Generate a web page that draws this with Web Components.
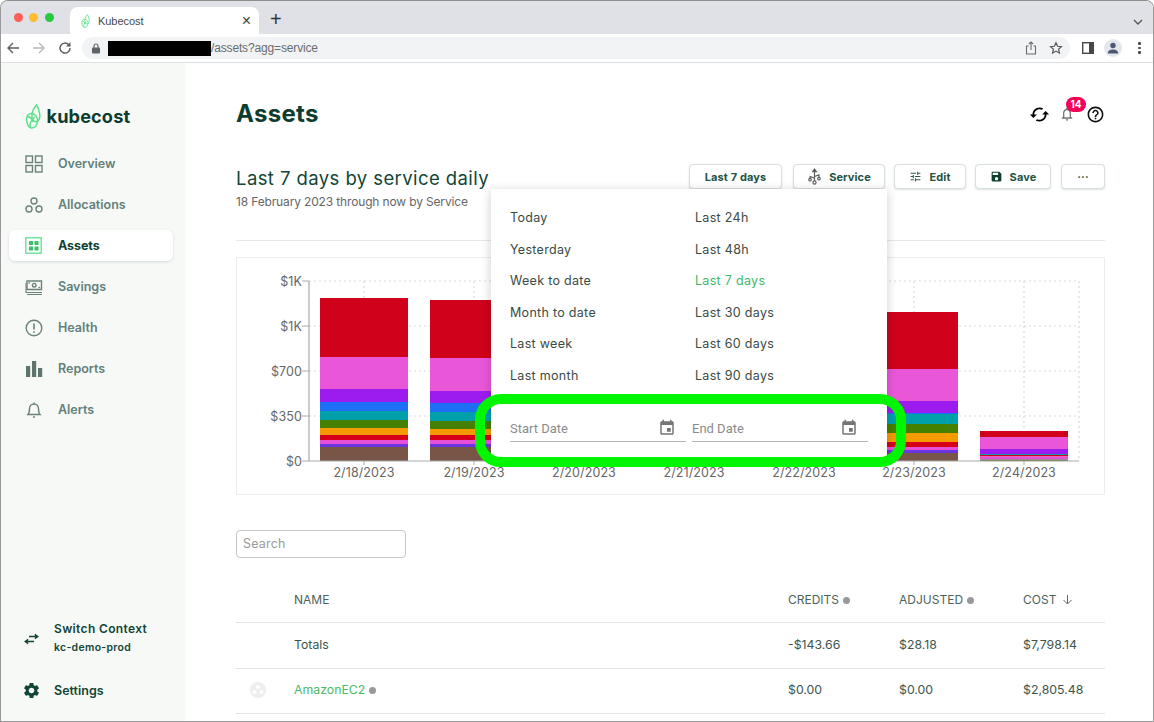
<!DOCTYPE html>
<html lang="en">
<head>
<meta charset="utf-8">
<title>Kubecost</title>
<style>
  html, body { margin: 0; height: 722px; overflow: hidden; background: #fff; }
  body { font-family: Inter, "Liberation Sans", sans-serif; }
</style>
</head>
<body>
<browser-window>
  <app-sidebar slot="side"></app-sidebar>
  <assets-page></assets-page>
</browser-window>

<script>
// Shared material icon paths
const ICONS = {
  cached: "M19 8l-4 4h3c0 3.31-2.69 6-6 6-1.010 0-1.970-.25-2.800-.7l-1.460 1.460C8.970 19.540 10.430 20 12 20c4.420 0 8-3.580 8-8h3l-4-4zM6 12c0-3.310 2.690-6 6-6 1.010 0 1.970.25 2.800.7l1.460-1.460C15.030 4.460 13.570 4 12 4c-4.420 0-8 3.580-8 8H1l4 4 4-4H6z",
  help: "M11 18h2v-2h-2v2zm1-16C6.48 2 2 6.48 2 12s4.48 10 10 10 10-4.48 10-10S17.52 2 12 2zm0 18c-4.41 0-8-3.59-8-8s3.59-8 8-8 8 3.59 8 8-3.59 8-8 8zm0-14c-2.21 0-4 1.79-4 4h2c0-1.1.9-2 2-2s2 .9 2 2c0 2-3 1.75-3 5h2c0-2.25 3-2.5 3-5 0-2.21-1.79-4-4-4z",
  bell: "M12 22c1.1 0 2-.9 2-2h-4c0 1.1.9 2 2 2zm6-6v-5c0-3.07-1.63-5.64-4.5-6.32V4c0-.83-.67-1.5-1.5-1.5s-1.5.67-1.5 1.5v.68C7.64 5.36 6 7.92 6 11v5l-2 2v1h16v-1l-2-2zm-2 1H8v-6c0-2.48 1.51-4.5 4-4.5s4 2.02 4 4.5v6z",
  event: "M17 12h-5v5h5v-5zM16 1v2H8V1H6v2H5c-1.11 0-1.99.9-1.99 2L3 19c0 1.1.89 2 2 2h14c1.1 0 2-.9 2-2V5c0-1.1-.9-2-2-2h-1V1h-2zm3 18H5V8h14v11z",
  gear: "M19.14 12.94c.04-.3.06-.61.06-.94 0-.32-.02-.64-.07-.94l2.03-1.58c.18-.14.23-.41.12-.61l-1.92-3.32c-.12-.22-.37-.29-.59-.22l-2.39.96c-.5-.38-1.03-.7-1.62-.94l-.36-2.54c-.04-.24-.24-.41-.48-.41h-3.84c-.24 0-.43.17-.47.41l-.36 2.54c-.59.24-1.13.57-1.62.94l-2.39-.96c-.22-.08-.47 0-.59.22L2.74 8.87c-.12.21-.08.47.12.61l2.03 1.58c-.05.3-.09.63-.09.94s.02.64.07.94l-2.03 1.58c-.18.14-.23.41-.12.61l1.92 3.32c.12.22.37.29.59.22l2.39-.96c.5.38 1.03.7 1.62.94l.36 2.54c.05.24.24.41.48.41h3.84c.24 0 .44-.17.47-.41l.36-2.54c.59-.24 1.13-.56 1.62-.94l2.39.96c.22.08.47 0 .59-.22l1.92-3.32c.12-.22.07-.47-.12-.61l-2.01-1.58zM12 15.6c-1.98 0-3.6-1.62-3.6-3.6s1.62-3.6 3.6-3.6 3.6 1.62 3.6 3.6-1.62 3.6-3.6 3.6z",
  save: "M17 3H5c-1.11 0-2 .9-2 2v14c0 1.1.89 2 2 2h14c1.1 0 2-.9 2-2V7l-4-4zm-5 16c-1.66 0-3-1.34-3-3s1.34-3 3-3 3 1.34 3 3-1.34 3-3 3zm3-10H5V5h10v4z",
  tune: "M3 17v2h6v-2H3zM3 5v2h10V5H3zm10 16v-2h8v-2h-8v-2h-2v6h2zM7 9v2H3v2h4v2h2V9H7zm14 4v-2H11v2h10zm-6-4h2V7h4V5h-4V3h-2v6z",
};

function icon(name, size, color) {
  return `<svg width="${size}" height="${size}" viewBox="0 0 24 24" fill="${color}" style="display:block;flex:none"><path d="${ICONS[name]}"/></svg>`;
}

const LEAF = (size) => `<svg width="${size * 0.64}" height="${size}" viewBox="0 0 16 25" fill="none" stroke="#5ee08a" stroke-width="1.500" style="display:block;flex:none">
  <path d="M11.500 1C8 5 6.500 9.500 7 13.500c.4 3 3 5 5 4 2.500-1.300 3.200-5 2.500-8.500C14 6 13 3 11.500 1z"/>
  <path d="M1.500 15c0-3.500 2.500-6 5.500-5.500 3.500.5 6 4 5.500 8-.5 3.500-2.500 6.500-6 6.500C3.500 24 1.500 19 1.500 15z"/>
  <path d="M2 12c3 1 5.500 3.500 6 6M5.500 24c-1.500-3 0-8 4.500-11"/>
</svg>`;

class BrowserWindow extends HTMLElement {
  constructor() {
    super();
    this.attachShadow({ mode: "open" });
    this.shadowRoot.innerHTML = `
      <style>
        :host { display: flex; flex-direction: column; width: 1154px; height: 722px; box-sizing: border-box;
          border: 1px solid #9a9a9a; border-top-color: #8d8d8d; border-radius: 8px 8px 0 0; overflow: hidden;
          font-family: Inter, "Liberation Sans", sans-serif; }
        .tabs { height: 33px; flex: none; background: #dfe1e6; display: flex; align-items: flex-end; }
        .lights { display: flex; gap: 6.500px; width: 69px; box-sizing: border-box; padding: 0 0 12px 12.500px; }
        .lights i { width: 9px; height: 9px; border-radius: 50%; }
        .tab { width: 189px; height: 27px; box-sizing: border-box; background: #fff; border-radius: 8px 8px 0 0;
          display: flex; align-items: center; padding: 0 8px 0 11px; font: 11px "Liberation Sans", sans-serif; color: #45494e; }
        .tab span { margin-left: 8px; flex: 1; letter-spacing: -.05px; }
        .tab b { font: 400 16px "Liberation Sans", sans-serif; color: #444; }
        .plus { font: 400 20px "Liberation Sans", sans-serif; color: #333; margin: 0 0 3px 11px; flex: 1; line-height: 24px; }
        .chev { margin: 0 10px 9px 0; }
        .bar { height: 28px; flex: none; background: #fff; border-bottom: 1px solid #dcdfe2; display: flex; align-items: center; }
        .nav { width: 81px; flex: none; display: flex; align-items: center; padding-left: 5px; box-sizing: border-box; gap: 9px; }
        .pill { flex: none; width: 988px; height: 22px; border-radius: 11px; background: #f1f3f4; display: flex; align-items: center;
          font: 12px "Liberation Sans", sans-serif; color: #6a6d70; padding-left: 9px; box-sizing: border-box; letter-spacing: -.15px; }
        .lock { margin-right: 7px; }
        .redact { width: 103px; height: 15px; background: #000; }
        .pill .right { margin-left: auto; display: flex; gap: 12px; margin-right: 7px; align-items: center; }
        .tools { display: flex; align-items: center; flex: 1; padding-left: 13px; gap: 10px; }
        .avatar { width: 18px; height: 18px; border-radius: 50%; background: #e3e6ea; display: flex; align-items: center; justify-content: center; }
        .dots { display: flex; flex-direction: column; gap: 2px; margin-left: 6px; }
        .dots i { width: 2.500px; height: 2.500px; border-radius: 50%; background: #44474a; }
        .content { flex: 1; display: flex; min-height: 0; position: relative; }
      </style>
      <div class="tabs">
        <div class="lights"><i style="background:#ff5f57"></i><i style="background:#febc2e"></i><i style="background:#28c840"></i></div>
        <div class="tab">${LEAF(14)}<span>Kubecost</span><b>×</b></div>
        <div class="plus">+</div>
        <svg class="chev" width="10" height="6" viewBox="0 0 10 6" fill="none" stroke="#555" stroke-width="1.300"><path d="M1 1l4 4 4-4"/></svg>
      </div>
      <div class="bar">
        <div class="nav">
          <svg width="14" height="14" viewBox="0 0 14 14" fill="none" stroke="#5a5e62" stroke-width="1.400"><path d="M13 7H2M7 2L2 7l5 5"/></svg>
          <svg width="14" height="14" viewBox="0 0 14 14" fill="none" stroke="#b5b8bb" stroke-width="1.400" style="margin-left:3px"><path d="M1 7h11M7 2l5 5-5 5"/></svg>
          <svg width="14" height="14" viewBox="0 0 14 14" fill="none" stroke="#5a5e62" stroke-width="1.500" style="margin-left:3px"><path d="M12 7a5 5 0 1 1-1.500-3.500L12 5"/><path d="M12.500 1v4.500H8z" fill="#5a5e62" stroke="none"/></svg>
        </div>
        <div class="pill">
          <svg class="lock" width="10" height="11" viewBox="0 0 10 11" fill="#5f6368"><rect x="1" y="4.500" width="8" height="6" rx="1"/><path d="M3 5V3a2 2 0 0 1 4 0v2" fill="none" stroke="#5f6368" stroke-width="1.100"/></svg>
          <div class="redact"></div><span>/assets?agg=service</span>
          <div class="right">
            <svg width="12" height="14" viewBox="0 0 12 14" fill="none" stroke="#6a6d70" stroke-width="1.100"><path d="M3.500 5H1.500v8h9V5H8.500M6 9V1M3.800 3L6 1l2.200 2"/></svg>
            <svg width="14" height="14" viewBox="0 0 24 24" fill="none" stroke="#55585b" stroke-width="2"><path d="M12 3l2.800 6 6.500.7-4.900 4.400 1.400 6.500L12 17.300l-5.800 3.300 1.400-6.500L2.700 9.700 9.200 9z"/></svg>
          </div>
        </div>
        <div class="tools">
          <svg width="12" height="12" viewBox="0 0 12 12" style="margin-left:-1px"><rect x=".7" y=".7" width="10.600" height="10.600" fill="none" stroke="#45484b" stroke-width="1.400"/><rect x="7" y="1" width="4.500" height="10" fill="#45484b"/></svg>
          <div class="avatar"><svg width="12" height="12" viewBox="0 0 12 12" fill="#4a5872"><circle cx="6" cy="3.500" r="2.700"/><path d="M.8 11.500c0-2.800 2.400-4 5.200-4s5.200 1.200 5.200 4z"/></svg></div>
          <div class="dots"><i></i><i></i><i></i></div>
        </div>
      </div>
      <div class="content"><slot name="side"></slot><slot></slot></div>
    `;
  }
}

class NavItem extends HTMLElement {
  constructor() {
    super();
    this.attachShadow({ mode: "open" });
    this.shadowRoot.innerHTML = `
      <style>
        :host { display: flex; align-items: center; height: 31px; margin: 0 12px 10px 8px; padding-left: 16px; gap: 15px;
          border-radius: 6px; font-size: 12.500px; font-weight: 600; color: #62807a; letter-spacing: 0; }
        :host([active]) { background: #fff; color: #0f3f31; font-weight: 700; letter-spacing: -.1px; box-shadow: 0 1px 3px rgba(40,70,60,.16); }
        ::slotted(svg) { display: block; flex: none; }
      </style>
      <slot name="icon"></slot><slot></slot>`;
  }
}

class AppSidebar extends HTMLElement {
  constructor() {
    super();
    this.attachShadow({ mode: "open" });
    const g = 'fill="none" stroke="#6b8279" stroke-width="1.400"';
    this.shadowRoot.innerHTML = `
      <style>
        :host { display: flex; flex-direction: column; width: 184px; height: 100%; box-sizing: border-box; flex: none; background: #f7f9f7;
          padding-top: 40px; }
        .logo { display: flex; align-items: center; gap: 6px; padding-left: 23.500px; margin-bottom: 19px;
          font-size: 18.200px; font-weight: 700; color: #0d3d2e; letter-spacing: .1px; height: 26px; }
        .space { flex: 1; }
        .foot { display: flex; align-items: center; gap: 13px; padding-left: 21px; color: #124536; font-weight: 600; }
        .foot svg { display: block; flex: none; }
        .ctx { font-size: 12px; line-height: 18px; margin-bottom: 23px; letter-spacing: .35px; gap: 15px; }
        .ctx svg { margin-left: 2px; }
        .ctx small { display: block; font-size: 10.400px; font-weight: 600; margin-top: 1px; }
        .set { font-size: 12.500px; height: 20px; margin-bottom: 21px; }
      </style>
      <div class="logo">${LEAF(25)}<span>kubecost</span></div>
      <nav-item><svg slot="icon" width="18" height="18" viewBox="0 0 18 18" ${g}><rect x="1" y="1" width="6.500" height="6.500"/><rect x="10.500" y="1" width="6.500" height="6.500"/><rect x="1" y="10.500" width="6.500" height="6.500"/><rect x="10.500" y="10.500" width="6.500" height="6.500"/></svg>Overview</nav-item>
      <nav-item><svg slot="icon" width="18" height="18" viewBox="0 0 18 18" ${g}><circle cx="9" cy="5" r="3"/><circle cx="4" cy="13" r="3"/><circle cx="14" cy="13" r="3"/></svg>Allocations</nav-item>
      <nav-item active><svg slot="icon" width="18" height="18" viewBox="0 0 18 18"><rect x=".8" y=".8" width="15.400" height="15.400" fill="none" stroke="#5ee08a" stroke-width="1.300"/><g fill="#3fbf6c"><rect x="4" y="4" width="4" height="4"/><rect x="9.500" y="4" width="4" height="4"/><rect x="4" y="9.500" width="4" height="4"/><rect x="9.500" y="9.500" width="4" height="4"/></g></svg>Assets</nav-item>
      <nav-item><svg slot="icon" width="18" height="18" viewBox="0 0 18 18" ${g}><path d="M2 3h14.500v8.500H2z"/><circle cx="9.200" cy="7.200" r="1.800"/><path d="M3.500 5.500l1.500-1M15 9l-1.500 1M1 5v9.500h16M2 16.500h15" stroke-width="1.100"/></svg>Savings</nav-item>
      <nav-item><svg slot="icon" width="18" height="18" viewBox="0 0 18 18" ${g}><circle cx="9" cy="9" r="7.800"/><path d="M9 4.500v6M9 12.200v1.500" stroke-width="1.600"/></svg>Health</nav-item>
      <nav-item><svg slot="icon" width="18" height="18" viewBox="0 0 18 18" fill="#5d766d"><rect x="1" y="6" width="4.200" height="11"/><rect x="7" y="1" width="4.200" height="16"/><rect x="13" y="8" width="4.200" height="9"/></svg>Reports</nav-item>
      <nav-item><svg slot="icon" width="18" height="18" viewBox="0 0 18 18" ${g}><path d="M3 13.500c1.500-1.500 1.500-3 1.500-6a4.500 4.500 0 0 1 9 0c0 3 0 4.500 1.500 6z"/><path d="M9 1.500v1.500"/><circle cx="9" cy="16" r="1" fill="#6b8279" stroke="none"/></svg>Alerts</nav-item>
      <div class="space"></div>
      <div class="foot ctx">
        <svg width="15" height="12" viewBox="0 0 18 14" fill="none" stroke="#124536" stroke-width="1.700"><path d="M6 4h10M13 1.500L16.500 4 13 6.500" /><path d="M12 10H2M5 7.500L1.500 10 5 12.500" /></svg>
        <div>Switch Context<small>kc-demo-prod</small></div>
      </div>
      <div class="foot set">${icon("gear", 19, "#124536")}<span>Settings</span></div>
    `;
  }
}

class KcButton extends HTMLElement {
  constructor() {
    super();
    this.attachShadow({ mode: "open" });
    this.shadowRoot.innerHTML = `
      <style>
        :host { display: inline-flex; align-items: center; justify-content: center; gap: 7px; height: 25px; box-sizing: border-box;
          border: 1px solid #d8e0dd; border-radius: 4px; background: #fff; box-shadow: 0 1px 2px rgba(30,60,50,.16);
          font-size: 11px; font-weight: 700; color: #245244; flex: none; letter-spacing: .1px; }
      </style><slot></slot>`;
  }
}

class BarChart extends HTMLElement {
  constructor() {
    super();
    this.attachShadow({ mode: "open" });
    // each bar: y boundaries from top to baseline, colours in the same order
    const colors = ["#d0021b", "#e957d8", "#9c1cf0", "#1e6ff5", "#00a0ab", "#458000", "#f59b00", "#d6001c", "#e84fd8", "#6a35e0", "#795548"];
    const full = [298, 357, 389, 402, 411, 420, 428, 435, 440, 444, 447, 461];
    const second = [300, 358, 391, 403, 412, 421, 429, 435, 440, 444, 447, 461];
    const sixth = [312, 369, 401, 413, 414, 424, 433, 442, 447, 450, 453, 461];
    const bars = [
      [320, full], [430, second], [540, full], [650, full], [760, full], [870, sixth],
    ];
    let rects = "";
    for (const [x, ys] of bars) {
      colors.forEach((c, i) => {
        rects += `<rect x="${x}" y="${ys[i]}" width="88" height="${ys[i + 1] - ys[i]}" fill="${c}"/>`;
      });
    }
    const last = [[431, 437, "#d0021b"], [437, 449, "#e957d8"], [449, 454, "#9c1cf0"], [454, 455, "#00a0ab"], [455, 456.500, "#d6001c"], [456.500, 459.500, "#e84fd8"], [459.500, 461, "#5a6b3a"]];
    for (const [a, b, c] of last) {
      rects += `<rect x="980" y="${a}" width="88" height="${b - a}" fill="${c}"/>`;
    }
    const dotted = 'stroke="#d9d9d9" stroke-width="1.200" stroke-dasharray="2 3" fill="none"';
    let grid = "";
    for (const y of [281, 326, 371, 416]) grid += `<path d="M309 ${y}H1079" ${dotted}/>`;
    for (const x of [364, 474, 584, 694, 804, 914, 1024, 1079]) grid += `<path d="M${x} 281V461" ${dotted}/>`;
    let labels = "";
    [["$1K", 281], ["$1K", 326], ["$700", 371], ["$350", 416], ["$0", 461]].forEach(([t, y]) => {
      labels += `<text x="302" y="${y + 5}" text-anchor="end">${t}</text><path d="M302 ${y}h7" stroke="#aaa"/>`;
    });
    ["2/18/2023", "2/19/2023", "2/20/2023", "2/21/2023", "2/22/2023", "2/23/2023", "2/24/2023"].forEach((t, i) => {
      const x = 364 + i * 110;
      labels += `<text x="${x}" y="477" text-anchor="middle">${t}</text><path d="M${x} 461v4" stroke="#aaa"/>`;
    });
    this.shadowRoot.innerHTML = `
      <style>
        :host { display: block; width: 869px; height: 238px; box-sizing: border-box; border: 1px solid #ececec; }
        svg { display: block; margin: -1px; }
        text { font: 12.500px Inter, "Liberation Sans", sans-serif; fill: #666; letter-spacing: .1px; }
      </style>
      <svg width="869" height="238" viewBox="236 257 869 238">
        ${grid}${rects}${labels}
        <path d="M309 281V461H1079" fill="none" stroke="#aaa" stroke-width="1.200"/>
      </svg>`;
  }
}

class DateField extends HTMLElement {
  constructor() {
    super();
    this.attachShadow({ mode: "open" });
    this.shadowRoot.innerHTML = `
      <style>
        :host { display: flex; align-items: center; justify-content: space-between; width: 176px; height: 27px; box-sizing: border-box;
          border-bottom: 1px solid #b5b5b5; font: 13px Roboto, "Liberation Sans", sans-serif; color: #8b8b8b; padding-right: 10px; }
      </style>
      <slot></slot>${icon("event", 18, "#757575")}`;
  }
}

class DateMenu extends HTMLElement {
  constructor() {
    super();
    this.attachShadow({ mode: "open" });
    const left = ["Today", "Yesterday", "Week to date", "Month to date", "Last week", "Last month"];
    const right = ["Last 24h", "Last 48h", "Last 7 days", "Last 30 days", "Last 60 days", "Last 90 days"];
    let rows = "";
    left.forEach((t, i) => {
      const on = right[i] === "Last 7 days" ? ' class="on"' : "";
      rows += `<div>${t}</div><div${on}>${right[i]}</div>`;
    });
    this.shadowRoot.innerHTML = `
      <style>
        :host { display: block; position: absolute; left: 306px; top: 126px; width: 396px; height: 268px; box-sizing: border-box;
          background: #fff; box-shadow: 0 2px 10px rgba(0,0,0,.2); padding: 13px 19px 0; font-size: 12.500px; color: #3a4a45; letter-spacing: .3px; }
        .grid { display: grid; grid-template-columns: 185px 1fr; grid-auto-rows: 31.500px; align-items: center; }
        .on { color: #3fb968; }
        .dates { display: flex; gap: 6px; margin-top: 24px; letter-spacing: 0; }
      </style>
      <div class="grid">${rows}</div>
      <div class="dates"><date-field>Start Date</date-field><date-field>End Date</date-field></div>`;
  }
}

class DataTable extends HTMLElement {
  constructor() {
    super();
    this.attachShadow({ mode: "open" });
    const info = (c) => `<i class="info" style="background:${c}"></i>`;
    this.shadowRoot.innerHTML = `
      <style>
        :host { display: block; font-size: 12.300px; color: #3e544c; letter-spacing: 0; }
        .row { display: grid; grid-template-columns: 58px 494px 111px 124px 1fr; align-items: center; height: 45.300px; box-sizing: border-box;
          border-bottom: 1.500px solid #dfe6e3; padding-bottom: 1.500px; }
        .head { font-size: 12px; color: #4d625b; letter-spacing: 0; }
        .info { display: inline-block; width: 7px; height: 7px; border-radius: 50%; margin-left: 4px; vertical-align: 0; }
        .link { color: #4cb968; }
        .ball { width: 16px; height: 16px; border-radius: 50%; background: #eee; margin-left: 14px; position: relative; }
        .ball::after { content: ""; position: absolute; left: 6px; top: 3px; width: 4px; height: 4px; border-radius: 50%; background: #fff;
          box-shadow: -3.500px 5px 0 #fff, 3.500px 5px 0 #fff; }
      </style>
      <div class="row head"><span></span><span>NAME</span><span>CREDITS${info("#999")}</span><span>ADJUSTED${info("#999")}</span><span>COST <svg width="11" height="11" viewBox="0 0 11 11" fill="none" stroke="#5b6d67" stroke-width="1" style="vertical-align:-1px;margin-left:2px"><path d="M5.500 1v9M1.500 6l4 4 4-4"/></svg></span></div>
      <div class="row"><span></span><span>Totals</span><span>-$143.66</span><span>$28.18</span><span>$7,798.14</span></div>
      <div class="row"><div class="ball"></div><span><span class="link">AmazonEC2</span>${info("#999")}</span><span>$0.00</span><span>$0.00</span><span>$2,805.48</span></div>`;
  }
}

class AssetsPage extends HTMLElement {
  constructor() {
    super();
    this.attachShadow({ mode: "open" });
    this.shadowRoot.innerHTML = `
      <style>
        :host { display: block; flex: 1; width: 969px; box-sizing: border-box; padding: 31px 48px 0 51px; position: relative; overflow: hidden; height: 658px;
          font-family: Inter, "Liberation Sans", sans-serif; }
        .top { display: flex; align-items: center; justify-content: space-between; height: 40px; }
        h1 { margin: -2px 0 0; font-size: 24px; font-weight: 700; color: #0d3d2e; letter-spacing: .3px; }
        .acts { display: flex; align-items: center; position: relative; }
        .acts svg:nth-child(2) { margin: 0 11.500px 0 8.500px; }
        .badge { position: absolute; left: 37px; top: -7px; min-width: 20px; height: 15px; border-radius: 8px; background: #f50057; color: #fff;
          font-size: 10px; font-weight: 700; text-align: center; line-height: 15px; }
        .bar { display: flex; justify-content: space-between; margin-top: 30px; height: 77px; box-sizing: border-box; border-bottom: 1px solid #e5e9e7; }
        h2 { margin: 3px 0 0; font-size: 18.500px; font-weight: 400; color: #124536; letter-spacing: .42px; line-height: 22px; }
        .sub { font-size: 12px; color: #666; margin-top: 5px; letter-spacing: -.15px; }
        .btns { display: flex; gap: 10px; }
        bar-chart { margin-top: 16px; }
        .search { display: flex; align-items: center; width: 170px; height: 28px; padding-bottom: 2px; margin-top: 35px; box-sizing: border-box; border: 1px solid #c4c8c6; border-radius: 4px;
          padding-left: 6px; font-size: 12.500px; color: #9a9a9a; letter-spacing: .2px; }
        data-table { margin-top: 20px; }
        .ring { position: absolute; left: 290px; top: 331px; width: 431px; height: 73px; box-sizing: border-box; border: 10px solid #00f600; border-radius: 26px; pointer-events: none; }
      </style>
      <div class="top">
        <h1>Assets</h1>
        <div class="acts">
          ${icon("cached", 21, "#000")}${icon("bell", 16, "#777")}${icon("help", 19, "#111")}
          <span class="badge">14</span>
        </div>
      </div>
      <div class="bar">
        <div>
          <h2>Last 7 days by service daily</h2>
          <div class="sub">18 February 2023 through now by Service</div>
        </div>
        <div class="btns">
          <kc-button style="width:93px">Last 7 days</kc-button>
          <kc-button style="width:92px;margin-left:1px"><svg width="15" height="17" viewBox="0 0 14 16" fill="none" stroke="#5a5f5d" stroke-width="1.100"><path d="M7 2v10M5.200 3.500L7 1l1.800 2.500z" fill="#5a5f5d"/><path d="M7 9.500L2.800 8V10M7 8l4.200-1.500V9"/><circle cx="7" cy="13.600" r="1.500"/><circle cx="2.800" cy="11" r="1.200"/><circle cx="11.200" cy="10" r="1.200"/></svg>Service</kc-button>
          <kc-button style="width:72px;margin-left:-1px">${icon("tune", 13, "#2f5a4d")}Edit</kc-button>
          <kc-button style="width:76px;margin-left:-1px">${icon("save", 13, "#0f3f31")}Save</kc-button>
          <kc-button style="width:44px">···</kc-button>
        </div>
      </div>
      <bar-chart></bar-chart>
      <div class="search">Search</div>
      <data-table></data-table>
      <date-menu></date-menu>
      <div class="ring"></div>`;
  }
}

customElements.define("browser-window", BrowserWindow);
customElements.define("nav-item", NavItem);
customElements.define("app-sidebar", AppSidebar);
customElements.define("kc-button", KcButton);
customElements.define("bar-chart", BarChart);
customElements.define("date-field", DateField);
customElements.define("date-menu", DateMenu);
customElements.define("data-table", DataTable);
customElements.define("assets-page", AssetsPage);
</script>
</body>
</html>
